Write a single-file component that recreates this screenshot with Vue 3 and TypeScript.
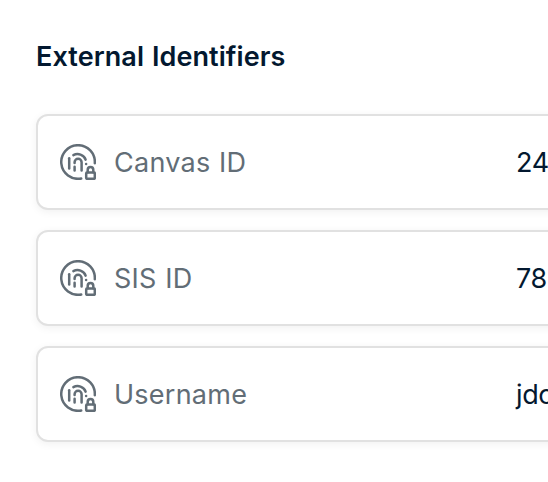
<script setup lang="ts">
interface Identifier {
  label: string
  value: string
}

const identifiers: Identifier[] = [
  { label: 'Canvas ID', value: '24' },
  { label: 'SIS ID', value: '78' },
  { label: 'Username', value: 'jdo' },
]
</script>

<template>
  <main class="panel">
    <h2 class="title">External Identifiers</h2>
    <ul class="list">
      <li v-for="item in identifiers" :key="item.label" class="card">
        <svg class="icon" viewBox="0 0 36 36" aria-hidden="true">
          <path d="M34.8 19.2A16.8 16.8 0 1 0 21.2 34.5" />
          <path d="M9.2 14.3v10.2" />
          <path d="M14.6 22.8v3.7M14.6 19v-.7a3.5 3.5 0 0 1 7 0v8.2" />
          <path d="M13.4 11.1C17.8 8.7 24 10.6 25.6 15.6" />
          <path d="M26.1 20v.1" />
          <path d="M27.7 28.2v-2.3a2.8 2.8 0 0 1 5.6 0v2.3" />
          <rect x="26.2" y="28.6" width="8.6" height="6.2" rx="0.8" />
        </svg>
        <span class="label">{{ item.label }}</span>
        <span class="value">{{ item.value }}</span>
      </li>
    </ul>
  </main>
</template>

<style>
body {
  background: #fff;
  overflow: hidden;
}
</style>

<style scoped>
.panel {
  box-sizing: border-box;
  height: 482px;
  padding: 37px 0 0 36px;
  overflow: hidden;
  font-family: Inter, "Liberation Sans", sans-serif;
  font-size: 27px;
  line-height: 40px;
  color: #03182f;
}
.title {
  margin: 0 0 37px;
  font-size: 27px;
  font-weight: 600;
  letter-spacing: 0.08px;
  word-spacing: 1px;
  white-space: nowrap;
}
.list {
  display: flex;
  flex-direction: column;
  gap: 20px;
  width: 600px;
  margin: 0;
  padding: 0;
  list-style: none;
}
.card {
  box-sizing: border-box;
  display: flex;
  align-items: center;
  height: 96px;
  padding-left: 22px;
  border: 2px solid #e1e1e1;
  border-radius: 12px;
  background: #fff;
  box-shadow: 0 2px 8px rgba(0, 0, 0, 0.06);
}
.icon {
  flex: none;
  width: 36px;
  height: 36px;
  fill: none;
  stroke: #626d76;
  stroke-width: 2.5;
  stroke-linecap: round;
  stroke-linejoin: round;
}
.label {
  flex: none;
  width: 402px;
  margin-left: 18px;
  padding-top: 2px;
  letter-spacing: 0.25px;
  word-spacing: 0.8px;
  color: #626d76;
}
.value {
  padding-top: 2px;
  letter-spacing: -0.4px;
  white-space: nowrap;
}
</style>
